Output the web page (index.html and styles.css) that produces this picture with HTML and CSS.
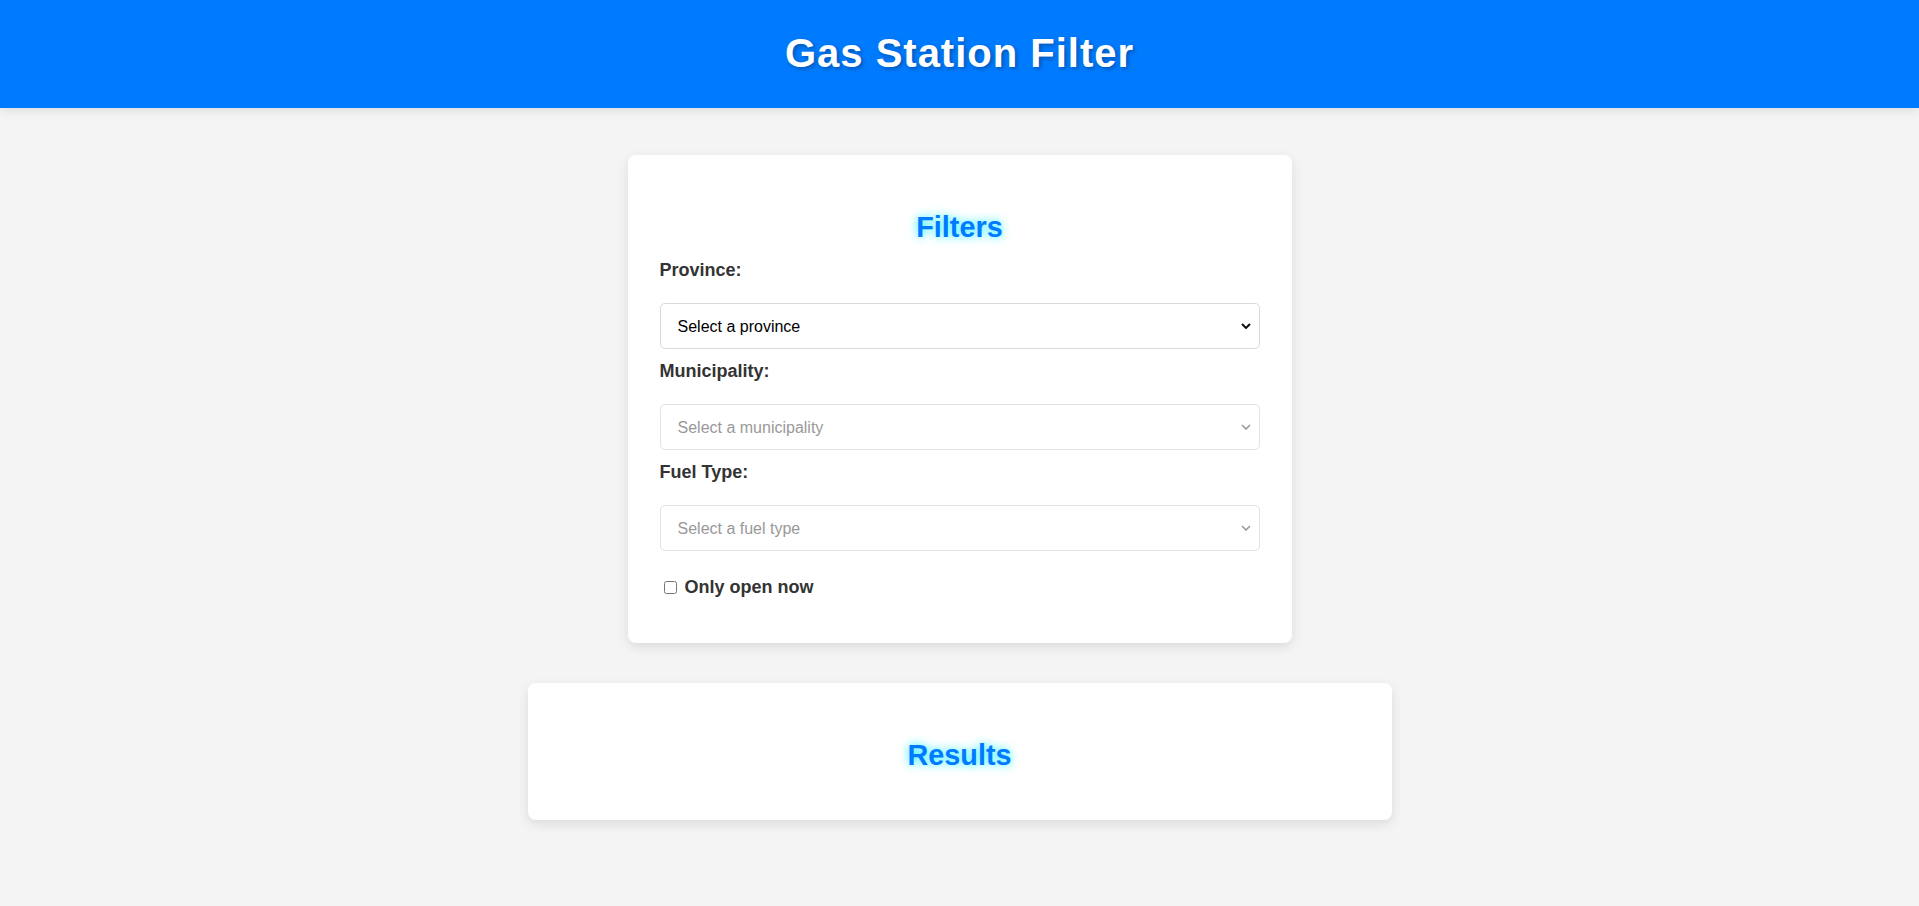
FILE: index.html
```html
<!DOCTYPE html>
<html lang="en">
<head>
<meta charset="utf-8">
<title>Gas Station Filter</title>
<link rel="stylesheet" href="styles.css">
</head>
<body>
<header class="site-header">
  <h1 class="site-title">Gas Station Filter</h1>
</header>
<main class="page">
  <section class="card filters-card">
    <h2 class="card-title">Filters</h2>
    <label class="field-label" for="province">Province:</label>
    <select id="province" class="field-select">
      <option>Select a province</option>
    </select>
    <label class="field-label" for="municipality">Municipality:</label>
    <select id="municipality" class="field-select" disabled>
      <option>Select a municipality</option>
    </select>
    <label class="field-label" for="fuel">Fuel Type:</label>
    <select id="fuel" class="field-select" disabled>
      <option>Select a fuel type</option>
    </select>
    <label class="check-row"><input type="checkbox" class="check-input"> Only open now</label>
  </section>
  <section class="card results-card">
    <h2 class="card-title">Results</h2>
  </section>
</main>
</body>
</html>
```

FILE: styles.css
```css
html, body {
  margin: 0;
  padding: 0;
}

body {
  background: #f4f4f4;
  font-family: "Liberation Sans", Arial, sans-serif;
  color: #333;
}

.site-header {
  background: #007bff;
  padding: 31px 0 32px;
  box-shadow: 0 2px 10px rgba(0, 0, 0, 0.1);
  text-align: center;
}

.site-title {
  margin: 0;
  font-size: 40px;
  font-weight: bold;
  letter-spacing: 1px;
  line-height: normal;
  color: #fff;
  text-shadow: 2px 2px 4px rgba(0, 0, 0, 0.3);
}

.page {
  display: flex;
  flex-direction: column;
  align-items: center;
  gap: 40px;
  padding: 47px 0 40px;
}

.card {
  background: #fff;
  border-radius: 8px;
  box-shadow: 0 4px 12px rgba(0, 0, 0, 0.1);
  padding: 32px;
  box-sizing: content-box;
}

.filters-card {
  width: 600px;
  display: flex;
  flex-direction: column;
}

.results-card {
  width: 800px;
}

.card-title {
  margin: 24px 0 16px;
  font-size: 28.8px;
  font-weight: bold;
  line-height: normal;
  text-align: center;
  color: #007bff;
  text-shadow: 0 0 10px rgba(0, 240, 255, 0.9);
}

.field-label {
  display: block;
  font-size: 18px;
  font-weight: bold;
  line-height: normal;
  color: #333;
  margin-bottom: 22px;
}

.field-select {
  display: block;
  width: 100%;
  height: 46px;
  box-sizing: border-box;
  margin: 0 0 12px;
  padding: 0 30px 0 17px;
  font-family: "Liberation Sans", Arial, sans-serif;
  font-size: 16px;
  color: #000;
  opacity: 1;
  -webkit-appearance: none;
  appearance: none;
  background: #fff url("data:image/svg+xml;utf8,<svg xmlns='http://www.w3.org/2000/svg' width='10' height='6' viewBox='0 0 10 6'><path d='M1 1l4 4 4-4' fill='none' stroke='%23111' stroke-width='2'/></svg>") no-repeat right 8px center;
  border: 1px solid #d9d9d9;
  border-radius: 5px;
}

.field-select:disabled {
  color: #999;
  opacity: 1;
  background-image: url("data:image/svg+xml;utf8,<svg xmlns='http://www.w3.org/2000/svg' width='10' height='6' viewBox='0 0 10 6'><path d='M1 1l4 4 4-4' fill='none' stroke='%23999' stroke-width='1.6'/></svg>");
  border-color: #e3e3e3;
}

.check-row {
  display: block;
  margin-top: 14px;
  margin-bottom: 13px;
  font-size: 18px;
  font-weight: bold;
  line-height: normal;
  color: #333;
}

.check-input {
  margin: 3px 3px 3px 4px;
  width: 13px;
  height: 13px;
  vertical-align: -1px;
}
```
